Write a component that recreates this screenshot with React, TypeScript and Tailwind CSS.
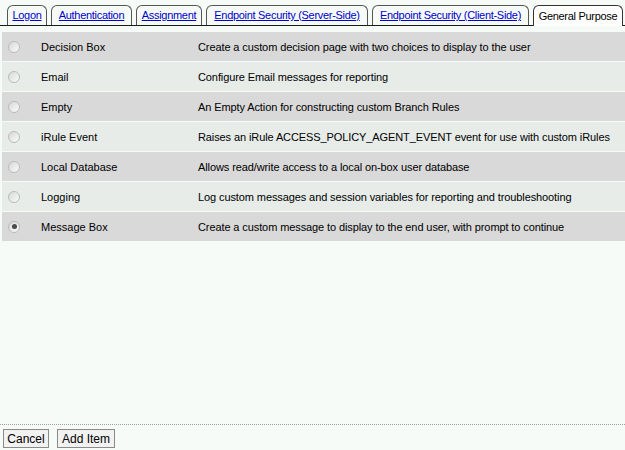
import React from "react";

const tabs: [string, string][] = [
  ["Logon", "w-[40px]"],
  ["Authentication", "w-[81px]"],
  ["Assignment", "w-[66px]"],
  ["Endpoint Security (Server-Side)", "w-[162px]"],
  ["Endpoint Security (Client-Side)", "w-[157px]"],
];

const rows: [string, string][] = [
  ["Decision Box", "Create a custom decision page with two choices to display to the user"],
  ["Email", "Configure Email messages for reporting"],
  ["Empty", "An Empty Action for constructing custom Branch Rules"],
  ["iRule Event", "Raises an iRule ACCESS_POLICY_AGENT_EVENT event for use with custom iRules"],
  ["Local Database", "Allows read/write access to a local on-box user database"],
  ["Logging", "Log custom messages and session variables for reporting and troubleshooting"],
  ["Message Box", "Create a custom message to display to the end user, with prompt to continue"],
];

function Radio({ checked }: { checked: boolean }) {
  return (
    <span className="w-[12px] h-[12px] rounded-full border border-[#b8bcb9] bg-gradient-to-br from-[#d6d8d6] to-[#fbfbfb] flex items-center justify-center">
      {checked && <span className="w-[5px] h-[5px] rounded-full bg-[#4a4a4a]" />}
    </span>
  );
}

export default function App() {
  return (
    <div
      className="w-[625px] h-[450px] bg-[#f6fbf8] flex flex-col text-[11px] text-black overflow-hidden"
      style={{ fontFamily: '"Liberation Sans", Arial, sans-serif' }}
    >
      <div className="h-[26px] pt-[6px] pl-[7px] flex items-end gap-[4px] border-b border-[#1a1a1a] whitespace-nowrap">
        {tabs.map(([t, w]) => (
          <div
            key={t}
            className={`${w} shrink-0 h-[20px] flex items-center justify-center border border-b-0 border-[#555] rounded-t-[6px] bg-[#f6fbf8] tracking-[-0.3px]`}
          >
            <a className="text-[#0000cc] underline leading-none">{t}</a>
          </div>
        ))}
        <div className="w-[90px] shrink-0 h-[21px] -mb-px flex items-center justify-center border border-b-0 border-[#333] rounded-t-[6px] bg-white tracking-[-0.3px] text-[11px]">
          <span className="leading-none">General Purpose</span>
        </div>
      </div>
      <div className="mt-[6px] ml-[2px] flex flex-col">
        {rows.map(([name, desc], i) => (
          <div
            key={name}
            className={`h-[30px] flex items-center border-b border-[#f6fbf8] whitespace-nowrap ${
              i % 2 === 0 ? "bg-[#d9d9d9]" : "bg-[#e7ece9]"
            }`}
          >
            <div className="w-[39px] pl-[6px] flex items-center">
              <Radio checked={i === 6} />
            </div>
            <div className="w-[157px] pt-px">{name}</div>
            <div className="pt-px tracking-[-0.1px]">{desc}</div>
          </div>
        ))}
      </div>
      <div className="flex-1" />
      <div className="border-t border-dotted border-[#a0a0a0] pt-[4px] pb-[2px] pl-[3px] flex gap-[8px]">
        <button className="w-[46px] h-[19px] border border-[#8a8a8a] bg-[#f2f2f2] text-[12px] leading-none">
          Cancel
        </button>
        <button className="w-[58px] h-[19px] border border-[#8a8a8a] bg-[#f2f2f2] text-[12px] leading-none">
          Add Item
        </button>
      </div>
    </div>
  );
}
